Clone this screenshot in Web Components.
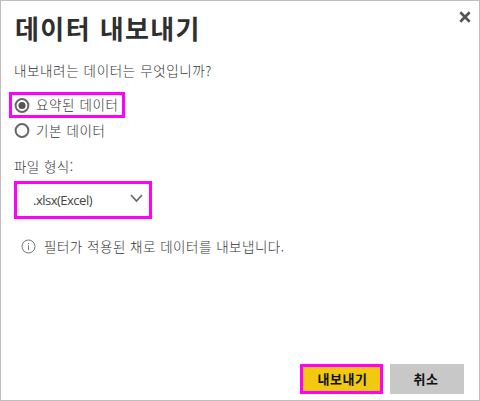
<!DOCTYPE html>
<html lang="ko">
<head>
<meta charset="utf-8">
<title>데이터 내보내기</title>
<style>
html,body{margin:0;height:100%;overflow:hidden}
body{font-family:"Noto Sans CJK KR",sans-serif;color:#333;font-size:13.5px}
</style>
</head>
<body>
<export-dialog>
  <dialog-header slot="header">데이터 내보내기</dialog-header>
  <field-label style="--gap:13px;--ls:.62px">내보내려는 데이터는 무엇입니까?</field-label>
  <radio-option style="--mt:12px" checked marked>요약된 데이터</radio-option>
  <radio-option>기본 데이터</radio-option>
  <field-label style="--gap:12px;--ls:.45px">파일 형식:</field-label>
  <select-box>.xlsx(Excel)</select-box>
  <info-note>필터가 적용된 채로 데이터를 내보냅니다.</info-note>
  <action-button slot="actions" primary>내보내기</action-button>
  <action-button slot="actions">취소</action-button>
</export-dialog>
<script>
const define = (name, html) => customElements.define(name, class extends HTMLElement {
  constructor() {
    super();
    this.attachShadow({mode: 'open'}).innerHTML = html;
  }
});

define('export-dialog', `<style>
:host{display:flex;flex-direction:column;box-sizing:border-box;width:480px;height:401px;border:1px solid #bfbfbf;background:#fff}
main{flex:1;display:flex;flex-direction:column;align-items:flex-start;padding-left:8px}
footer{display:flex;justify-content:flex-end;gap:7px;padding:0 15px 6px 0}
</style><slot name="header"></slot><main><slot></slot></main><footer><slot name="actions"></slot></footer>`);

define('dialog-header', `<style>
:host{display:flex;justify-content:space-between;align-items:flex-start;height:46px;padding:0 8px 0 14px;color:#2f2f2f}
h1{margin:7px 0 0;font-size:26px;line-height:40px;font-weight:700;letter-spacing:1.4px;white-space:nowrap}
svg{display:block;margin-top:10px}
</style><h1><slot></slot></h1>
<svg width="12" height="12" viewBox="0 0 12 12" stroke="#555" stroke-width="2.7"><path d="M1.3 1.3l9.4 9.4M10.7 1.3l-9.4 9.4"/></svg>`);

define('field-label', `<style>
:host{display:block;margin:var(--gap) 0 0 5px;font-weight:300;line-height:20px;letter-spacing:var(--ls);white-space:nowrap}
</style><slot></slot>`);

define('radio-option', `<style>
:host{display:flex;align-items:center;gap:6px;box-sizing:border-box;height:26px;width:116px;margin-top:var(--mt,0);padding-left:2px;border:3px solid transparent;font-weight:300;line-height:20px;white-space:nowrap;letter-spacing:.6px}
:host([marked]){border-color:#f0f}
:host(:not([marked])) svg{margin-top:-1px}
span{margin-top:-2px}
circle.dot{display:none}
:host([checked]) circle.dot{display:block}
</style><svg width="16" height="15" viewBox="0 0 16 15"><circle cx="8" cy="7.5" r="6.4" fill="none" stroke="#666" stroke-width="2"/><circle class="dot" cx="8" cy="7.5" r="3.6" fill="#555"/></svg><span><slot></slot></span>`);

define('select-box', `<style>
:host{display:flex;align-items:center;justify-content:space-between;box-sizing:border-box;width:138px;height:38px;margin:5px 0 0 5px;padding:0 6px 0 16px;border:3px solid #f0f;color:#444;font:13px/20px "Open Sans","Noto Sans",sans-serif;letter-spacing:-.5px}
svg{margin-top:-3px}
</style><span><slot></slot></span><svg width="13" height="9" viewBox="0 0 13 9" fill="none" stroke="#666" stroke-width="1.7"><path d="M1 1l5.5 6L12 1"/></svg>`);

define('info-note', `<style>
:host{display:flex;align-items:center;gap:8px;margin:17px 0 0 12px;font-weight:300;line-height:20px;white-space:nowrap;letter-spacing:.5px}
</style><svg width="15" height="15" viewBox="0 0 15 15" fill="none" stroke="#777"><circle cx="7.5" cy="7.5" r="6.5"/><path d="M7.5 6.5v4.5M7.5 4v1.2"/></svg><span><slot></slot></span>`);

define('action-button', `<style>
:host{display:block;box-sizing:border-box;width:74px;height:30px}
:host([primary]){width:83px}
button{display:block;box-sizing:border-box;width:100%;height:100%;margin:0;padding:0 2px 0 0;border:0;background:#c8c8c8;color:#111;font:700 13px/20px "Noto Sans CJK KR",sans-serif;letter-spacing:.6px}
:host([primary]) button{background:#f2c811;border:3px solid #f0f;padding:0 0 0 2px}
</style><button><slot></slot></button>`);
</script>
</body>
</html>
